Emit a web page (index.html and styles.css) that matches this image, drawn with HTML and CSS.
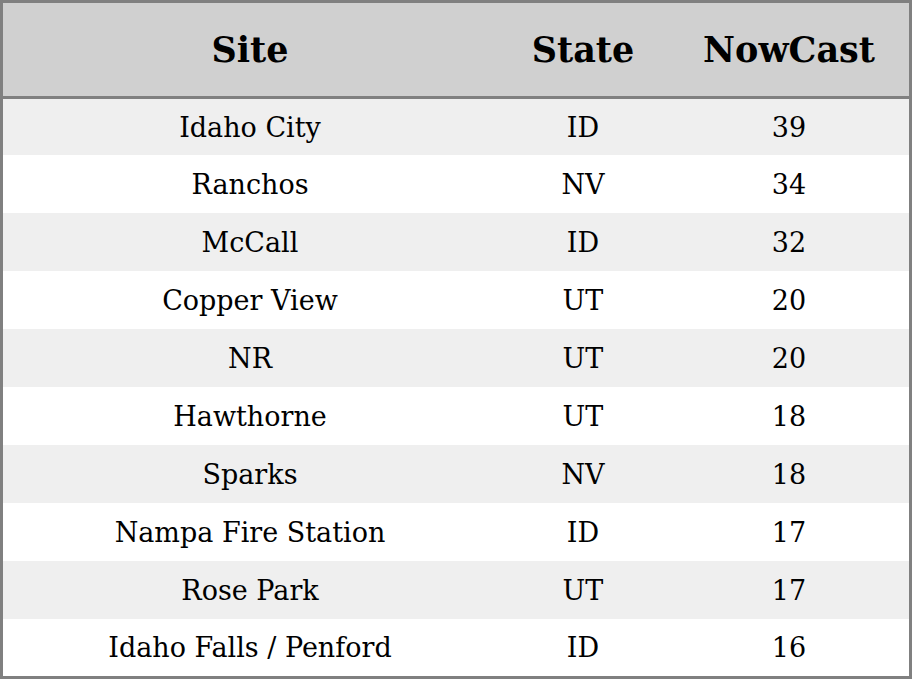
FILE: index.html
```html
<!DOCTYPE html>
<html>
<head>
<meta charset="utf-8">
<link rel="stylesheet" href="styles.css">
</head>
<body>
<div class="frame">
  <table class="aq">
    <colgroup>
      <col class="c-site">
      <col class="c-state">
      <col class="c-now">
    </colgroup>
    <thead>
      <tr><th>Site</th><th>State</th><th>NowCast</th></tr>
    </thead>
    <tbody>
      <tr class="first"><td>Idaho City</td><td>ID</td><td>39</td></tr>
      <tr><td>Ranchos</td><td>NV</td><td>34</td></tr>
      <tr><td>McCall</td><td>ID</td><td>32</td></tr>
      <tr><td>Copper View</td><td>UT</td><td>20</td></tr>
      <tr><td>NR</td><td>UT</td><td>20</td></tr>
      <tr><td>Hawthorne</td><td>UT</td><td>18</td></tr>
      <tr><td>Sparks</td><td>NV</td><td>18</td></tr>
      <tr><td>Nampa Fire Station</td><td>ID</td><td>17</td></tr>
      <tr><td>Rose Park</td><td>UT</td><td>17</td></tr>
      <tr class="last"><td>Idaho Falls / Penford</td><td>ID</td><td>16</td></tr>
    </tbody>
  </table>
</div>
</body>
</html>
```

FILE: styles.css
```css
html, body {
  margin: 0;
  padding: 0;
  background: #ffffff;
}
.frame {
  width: 912px;
  height: 679px;
  box-sizing: border-box;
  border: 3px solid #808080;
  overflow: hidden;
}
.aq {
  width: 906px;
  border-collapse: collapse;
  border-spacing: 0;
  table-layout: fixed;
  font-family: "DejaVu Serif", serif;
  color: #000;
}
.c-site { width: 494px; }
.c-state { width: 172px; }
.c-now { width: 240px; }
.aq th {
  height: 93px;
  padding: 0;
  background: #d0d0d0;
  font-size: 35px;
  font-weight: bold;
  text-align: center;
  border-bottom: 3px solid #808080;
}
.aq td {
  height: 58px;
  padding: 0;
  font-size: 27px;
  text-align: center;
}
.aq tbody tr:nth-child(odd) td { background: #efefef; }
.aq tbody tr:nth-child(even) td { background: #ffffff; }
.aq tr.first td { height: 56px; }
.aq tr.last td { height: 57px; }
```
